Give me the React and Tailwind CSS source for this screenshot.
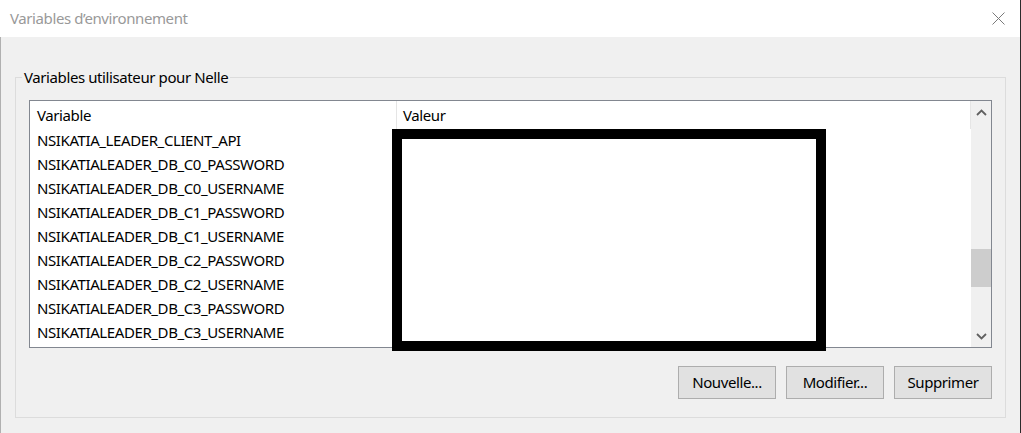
import React from 'react';

const VARIABLES = [
  'NSIKATIA_LEADER_CLIENT_API',
  'NSIKATIALEADER_DB_C0_PASSWORD',
  'NSIKATIALEADER_DB_C0_USERNAME',
  'NSIKATIALEADER_DB_C1_PASSWORD',
  'NSIKATIALEADER_DB_C1_USERNAME',
  'NSIKATIALEADER_DB_C2_PASSWORD',
  'NSIKATIALEADER_DB_C2_USERNAME',
  'NSIKATIALEADER_DB_C3_PASSWORD',
  'NSIKATIALEADER_DB_C3_USERNAME',
];

function Chevron({ up }) {
  return (
    <svg width="11" height="7" viewBox="0 0 11 7" className="block">
      <path
        d={up ? 'M1 6 L5.5 1.5 L10 6' : 'M1 1 L5.5 5.5 L10 1'}
        fill="none"
        stroke="#606060"
        strokeWidth="1.8"
      />
    </svg>
  );
}

function Bouton({ children }) {
  return (
    <button className="w-[98px] h-[33px] bg-[#e1e1e1] border border-[#adadad] text-black text-[15px] tracking-[-0.4px]">
      {children}
    </button>
  );
}

export default function App() {
  return (
    <div
      className="relative w-[1021px] h-[433px] overflow-hidden bg-[#f0f0f0] border-r border-r-[#2b2b2b] text-[15px] text-black tracking-[-0.4px]"
      style={{ fontFamily: '"Noto Sans", "Open Sans", sans-serif' }}
    >
      {/* barre de titre */}
      <div className="h-[37px] bg-white flex items-center justify-between pl-[10px] pr-[15px]">
        <span className="text-[#999999] text-[15px]">Variables d’environnement</span>
        <svg width="13" height="13" viewBox="0 0 13 13">
          <path d="M0.5 0.5 L12.5 12.5 M12.5 0.5 L0.5 12.5" stroke="#7a7a7a" strokeWidth="1" fill="none" />
        </svg>
      </div>

      <div className="border-l border-l-[#b0b0b0] h-[396px] pt-[30px] pl-[14px] pr-[14px]">
        <fieldset className="border border-[#dcdcdc] px-[13px] pb-[18px] w-[991px]">
          <legend className="-ml-[7px] px-[2px] leading-[20px]">Variables utilisateur pour Nelle</legend>

          {/* liste */}
          <div className="mt-[13px] h-[248px] border border-[#828790] bg-white flex">
            <div className="flex-1 flex flex-col overflow-hidden">
              <div className="h-[28px] flex shrink-0">
                <div className="w-[367px] pl-[7px] flex items-center border-r border-r-[#e5e5e5]">Variable</div>
                <div className="flex-1 pl-[6px] flex items-center border-r border-r-[#e5e5e5]">Valeur</div>
              </div>
              {VARIABLES.map((v) => (
                <div key={v} className="h-[24px] flex items-center pl-[7px] pb-[2px] shrink-0">
                  {v}
                </div>
              ))}
            </div>
            {/* barre de défilement */}
            <div className="w-[20px] bg-[#f0f0f0] flex flex-col items-center">
              <div className="h-[22px] flex items-center justify-center">
                <Chevron up />
              </div>
              <div className="flex-1 flex flex-col w-full">
                <div className="h-[126px]" />
                <div className="h-[38px] bg-[#cdcdcd] w-full" />
              </div>
              <div className="h-[22px] flex items-center justify-center">
                <Chevron />
              </div>
            </div>
          </div>

          {/* boutons */}
          <div className="mt-[18px] flex justify-end gap-[10px]">
            <Bouton>Nouvelle...</Bouton>
            <Bouton>Modifier...</Bouton>
            <Bouton>Supprimer</Bouton>
          </div>
        </fieldset>
      </div>

      {/* valeurs masquées */}
      <div className="absolute left-[392px] top-[129px] w-[434px] h-[222px] border-[10px] border-black bg-white" />
    </div>
  );
}
